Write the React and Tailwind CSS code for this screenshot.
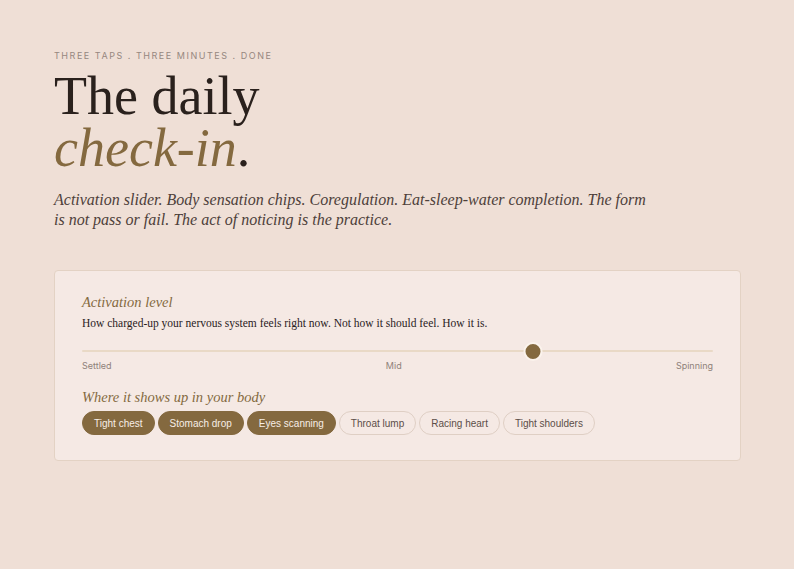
import { useState } from 'react';

const serif = { fontFamily: '"Liberation Serif", "DejaVu Serif", serif' };

const chips = [
  { label: 'Tight chest', on: true },
  { label: 'Stomach drop', on: true },
  { label: 'Eyes scanning', on: true },
  { label: 'Throat lump', on: false },
  { label: 'Racing heart', on: false },
  { label: 'Tight shoulders', on: false },
];

export default function App() {
  const [selected, setSelected] = useState(chips.map(c => c.on));
  const [level] = useState(71.5);

  const toggle = (i) => setSelected(s => s.map((v, j) => (j === i ? !v : v)));

  return (
    <div className="min-h-[569px] w-full bg-[#efdfd6] px-[54px] pt-[50px] font-['Inter',sans-serif]">
      {/* Header */}
      <div className="text-[9px] tracking-[0.17em] text-[#968780] uppercase leading-[12px]">
        Three taps . Three minutes . Done
      </div>
      <h1 className="mt-[8px] text-[54px] leading-[52px] text-[#2a211d]" style={serif}>
        <span className="block">The daily</span>
        <span className="block"><span className="italic text-[#84693f]">check-in</span>.</span>
      </h1>
      <p className="mt-[16px] max-w-[598px] text-[16px] leading-[20px] italic text-[#4d403a]" style={serif}>
        Activation slider. Body sensation chips. Coregulation. Eat-sleep-water completion. The form is not pass or fail. The act of noticing is the practice.
      </p>

      {/* Card */}
      <div className="mt-[40px] w-[687px] rounded-[4px] border border-[#e3d2c4] bg-[#f5e9e4] px-[27px] pt-[21px] pb-[25px]">
        <div className="text-[14.5px] leading-[20px] italic text-[#84693f]" style={serif}>Activation level</div>
        <div className="mt-[2px] text-[11.5px] leading-[18px] text-[#2a211d]" style={serif}>
          How charged-up your nervous system feels right now. Not how it should feel. How it is.
        </div>

        {/* Slider */}
        <div className="relative mt-[10px] h-[18px]">
          <div className="absolute left-0 right-0 top-[8px] h-[2px] rounded-full bg-[#e9d9c6]" />
          <div
            className="absolute top-0 h-[19px] w-[19px] -translate-x-1/2 rounded-full border-2 border-[#fbf3ec] bg-[#84693f]"
            style={{ left: `${level}%` }}
          />
        </div>
        <div className="flex justify-between text-[9px] leading-[12px] text-[#8f817a]">
          <span>Settled</span>
          <span>Mid</span>
          <span>Spinning</span>
        </div>

        <div className="mt-[15px] text-[14.5px] leading-[20px] italic text-[#84693f]" style={serif}>
          Where it shows up in your body
        </div>
        <div className="mt-[4px] flex flex-wrap gap-[3px] font-['Liberation_Sans',sans-serif]">
          {chips.map((c, i) => (
            <button
              key={c.label}
              onClick={() => toggle(i)}
              className={`h-[24px] rounded-full border px-[11px] text-[10px] ${
                selected[i]
                  ? 'border-[#84693f] bg-[#84693f] text-[#f7eee6]'
                  : 'border-[#dfcfc4] bg-transparent text-[#5c4e48]'
              }`}
            >
              {c.label}
            </button>
          ))}
        </div>
      </div>
    </div>
  );
}
